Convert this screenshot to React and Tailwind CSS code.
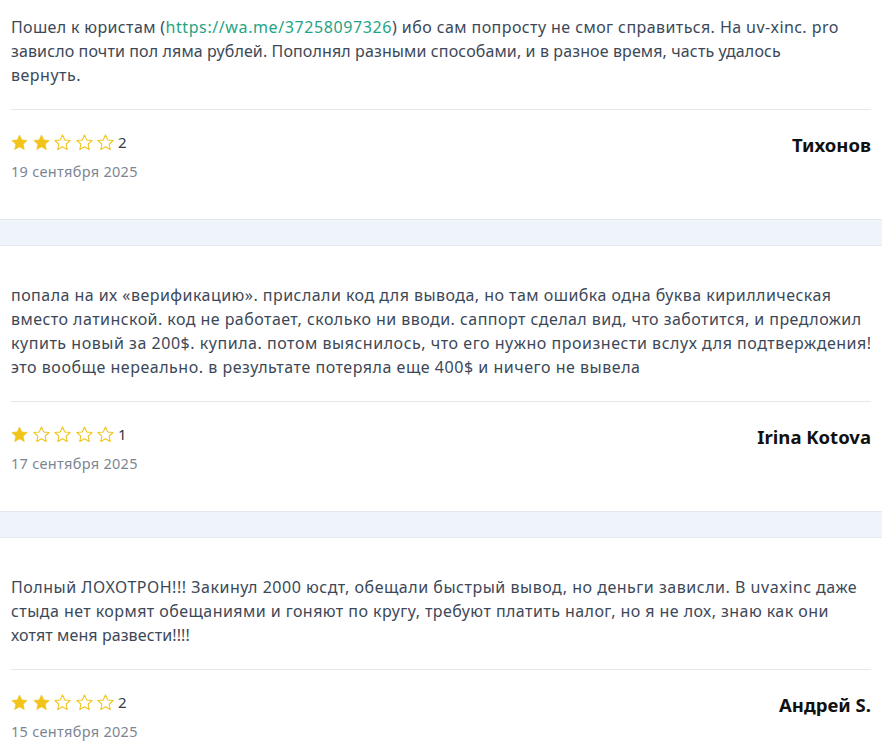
import React from "react";

const Star = ({ filled }) => (
  <svg width="17" height="17" viewBox="0 0 24 24" className="shrink-0">
    <polygon
      points="12,1.5 15.2,8.4 22.8,9.2 17.1,14.3 18.7,21.9 12,18 5.3,21.9 6.9,14.3 1.2,9.2 8.8,8.4"
      fill={filled ? "#f0c419" : "none"}
      stroke="#f0c419"
      strokeWidth={filled ? 1 : 1.5}
      strokeLinejoin="round"
    />
  </svg>
);

const reviews = [
  {
    lines: [
      [
        <>
          <span className="tracking-[0.35px]">Пошел к юристам (</span>
          <span className="text-[#1fa486] tracking-[0.6px]">https://wa.me/37258097326</span>
          <span className="tracking-[0.42px]">) ибо сам попросту не смог справиться. На uv-xinc. pro</span>
        </>,
        "tracking-normal",
      ],
      ["зависло почти пол ляма рублей. Пополнял разными способами, и в разное время, часть удалось", "tracking-[0.12px]"],
      ["вернуть.", "tracking-[0.5px]"],
    ],
    rating: 2,
    date: "19 сентября 2025",
    name: "Тихонов",
    first: true,
  },
  {
    lines: [
      ["попала на их «верификацию». прислали код для вывода, но там ошибка одна буква кириллическая", "tracking-[0.46px]"],
      ["вместо латинской. код не работает, сколько ни вводи. саппорт сделал вид, что заботится, и предложил", "tracking-[0.45px]"],
      ["купить новый за 200$. купила. потом выяснилось, что его нужно произнести вслух для подтверждения!", "tracking-[0.53px]"],
      ["это вообще нереально. в результате потеряла еще 400$ и ничего не вывела", "tracking-[0.53px]"],
    ],
    rating: 1,
    date: "17 сентября 2025",
    name: "Irina Kotova",
  },
  {
    lines: [
      ["Полный ЛОХОТРОН!!! Закинул 2000 юсдт, обещали быстрый вывод, но деньги зависли. В uvaxinc даже", "tracking-[0.52px]"],
      ["стыда нет кормят обещаниями и гоняют по кругу, требуют платить налог, но я не лох, знаю как они", "tracking-[0.44px]"],
      ["хотят меня развести!!!!", "tracking-[0.1px]"],
    ],
    rating: 2,
    date: "15 сентября 2025",
    name: "Андрей S.",
  },
];

const Card = ({ r }) => (
  <div className={`bg-white px-[11px] pb-[38px] ${r.first ? "pt-[15px]" : "pt-[37px]"}`}>
    <div className="text-[16px] leading-[24px] text-[#3c4858]">
      {r.lines.map(([l, t], i) => (
        <div key={i} className={`whitespace-nowrap ${t}`}>
          {l}
        </div>
      ))}
    </div>
    <div className="mt-[22px] border-t border-[#e8e8e8] pt-[22px] flex justify-between items-start">
      <div>
        <div className="flex items-center h-[20px]">
          <div className="flex items-center gap-[4.5px]">
            {[1, 2, 3, 4, 5].map((n) => (
              <Star key={n} filled={n <= r.rating} />
            ))}
          </div>
          <span className="ml-[4px] text-[15px] leading-[20px] text-[#333b45]">{r.rating}</span>
        </div>
        <div className="mt-[9px] text-[14.5px] leading-[20px] tracking-[0.3px] text-[#7c8692]">{r.date}</div>
      </div>
      <div className="text-[18.5px] leading-[26px] font-bold text-[#111111]">{r.name}</div>
    </div>
  </div>
);

export default function App() {
  return (
    <div
      className="w-[882px] h-[748px] overflow-hidden bg-white"
      style={{ fontFamily: '"Noto Sans", "Open Sans", sans-serif' }}
    >
      {reviews.map((r, i) => (
        <React.Fragment key={i}>
          {i > 0 && <div className="h-[27px] bg-[#eff3fa] border-y border-[#e3e8ef]" />}
          <Card r={r} />
        </React.Fragment>
      ))}
    </div>
  );
}
